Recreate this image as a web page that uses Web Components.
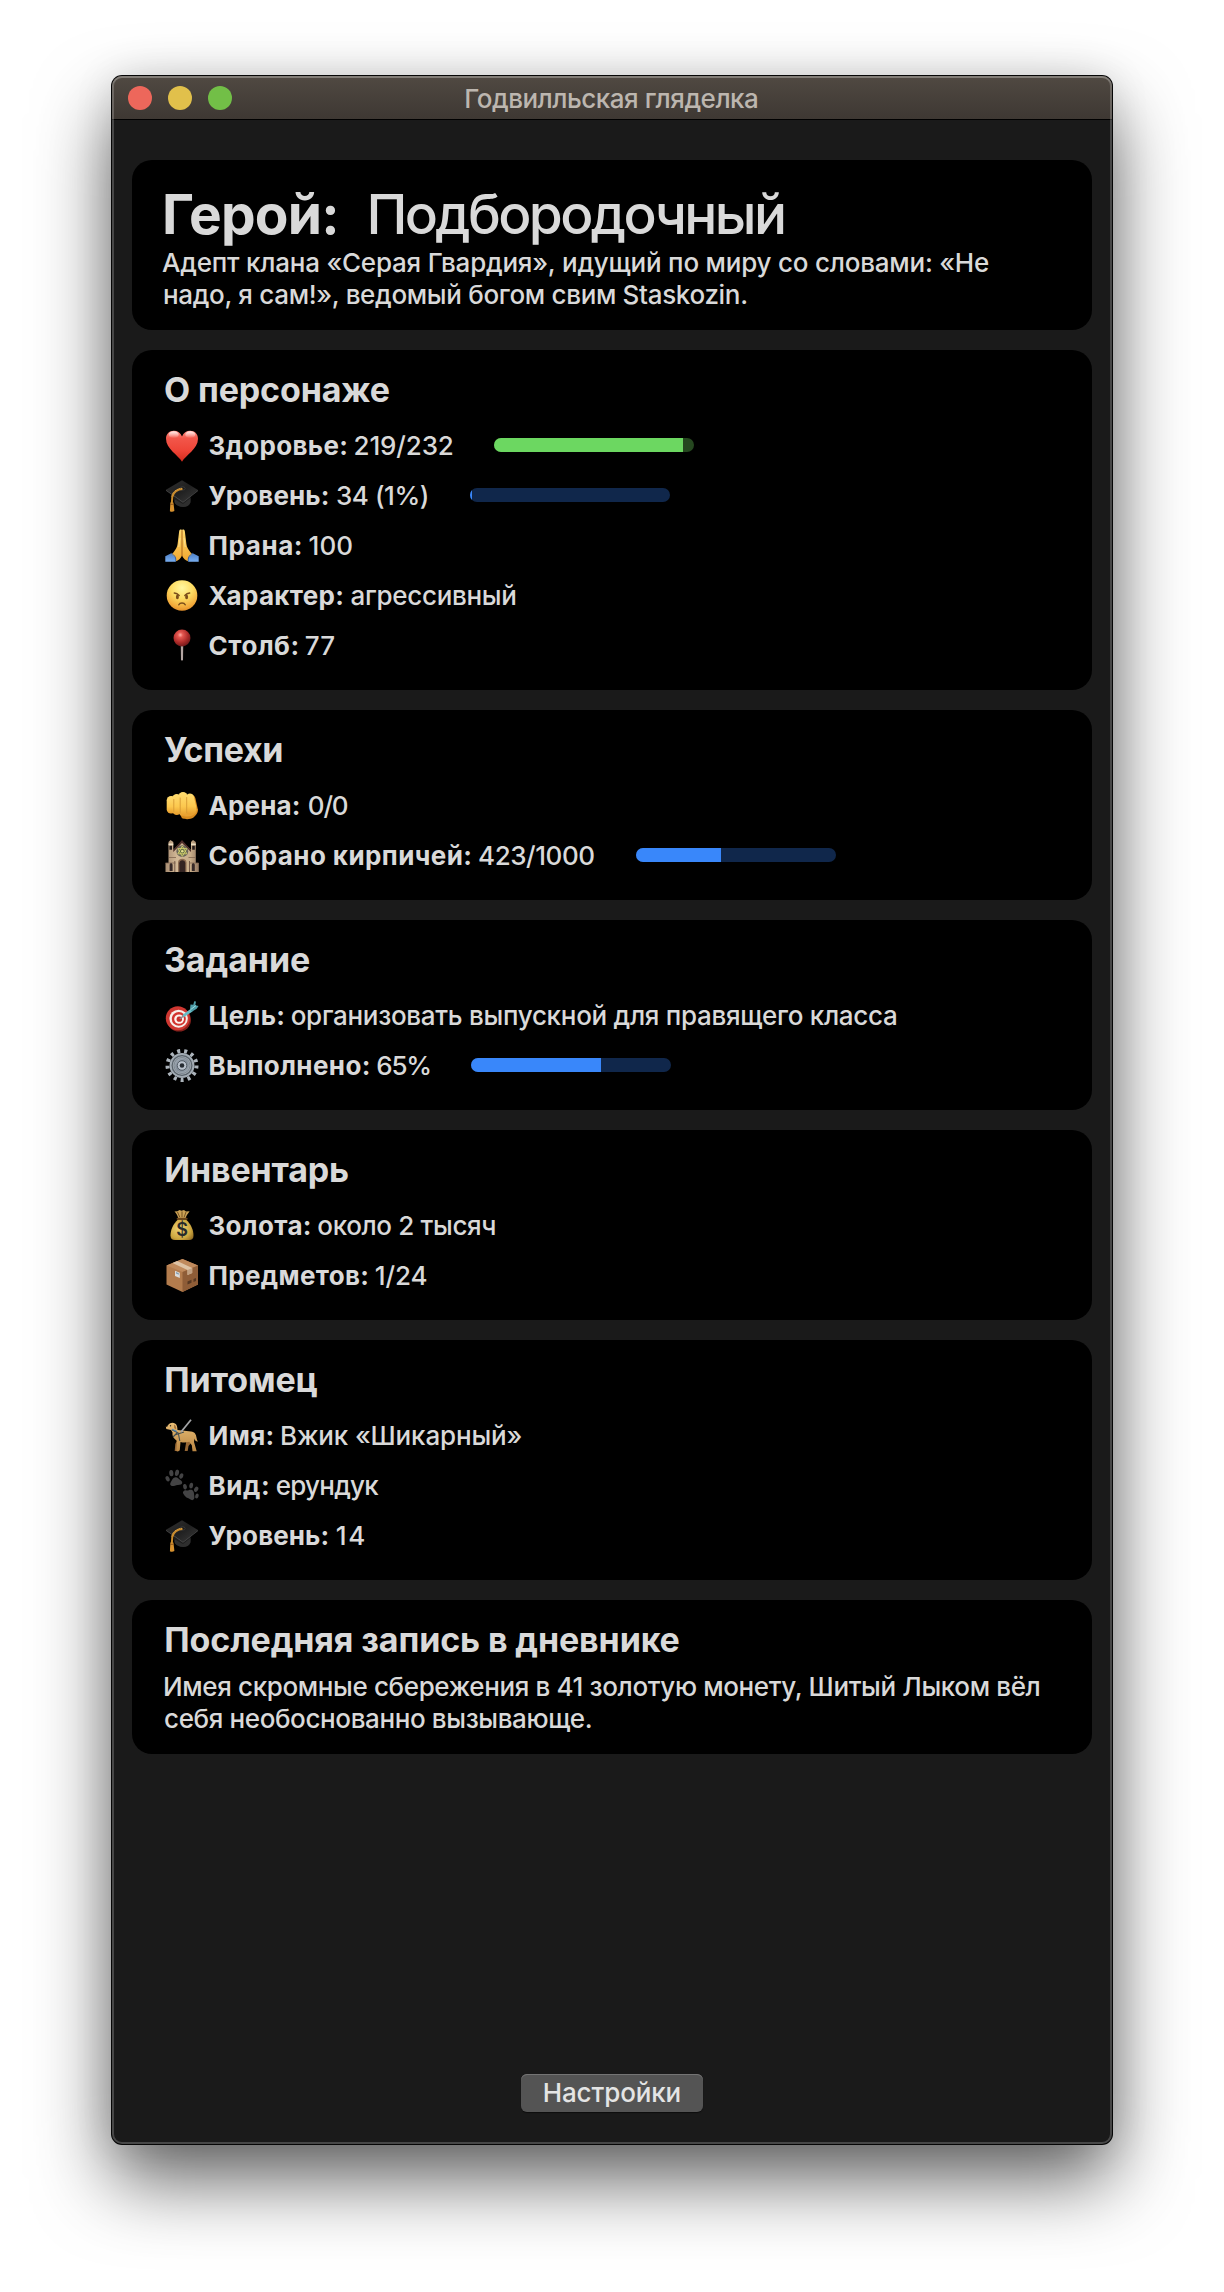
<!DOCTYPE html>
<html lang="ru">
<head>
<meta charset="utf-8">
<title>Годвилльская гляделка</title>
<style>
html, body { margin: 0; background: #fff; }
body { width: 1224px; height: 2292px; overflow: hidden; font-family: Inter, "Liberation Sans", sans-serif; font-size: 26px; font-weight: 450; line-height: 32px; color: #d9d9d9; }
</style>
</head>
<body>
<app-window caption="Годвилльская гляделка">
  <hero-card></hero-card>
  <info-card heading="О персонаже" w="223.5">
    <stat-row icon="heart" label="Здоровье:" lw="136.5" value="219/232" gap="8.5" vw="98" bar="94.5" color="green" bargap="41.8"></stat-row>
    <stat-row icon="cap" label="Уровень:" lw="119" value="34 (1%)" gap="8.5" vw="90.5" bar="1" bargap="42.5"></stat-row>
    <stat-row icon="pray" label="Прана:" lw="91" value="100" gap="9" vw="42.5"></stat-row>
    <stat-row icon="angry" label="Характер:" lw="133.5" value="агрессивный" gap="8.5" vw="163.5"></stat-row>
    <stat-row icon="pin" label="Столб:" lw="87.7" value="77" gap="8.5" vw="28.3"></stat-row>
  </info-card>
  <info-card heading="Успехи" w="118">
    <stat-row icon="fist" label="Арена:" lw="90" value="0/0" gap="9.3" vw="38.7"></stat-row>
    <stat-row icon="castle" label="Собрано кирпичей:" lw="260.5" value="423/1000" gap="9" vw="115" bar="42.3" bargap="42"></stat-row>
  </info-card>
  <info-card heading="Задание" w="143.7">
    <stat-row icon="target" label="Цель:" lw="73.5" value="организовать выпускной для правящего класса" gap="8.7" vw="604"></stat-row>
    <stat-row icon="gear" label="Выполнено:" lw="159" value="65%" gap="8.8" vw="52.7" bar="65" bargap="41"></stat-row>
  </info-card>
  <info-card heading="Инвентарь" w="181.5" shift="1.300">
    <stat-row icon="bag" label="Золота:" lw="100" value="около 2 тысяч" gap="8.8" vw="176.7"></stat-row>
    <stat-row icon="box" label="Предметов:" lw="157.5" value="1/24" gap="8.800" vw="50.4"></stat-row>
  </info-card>
  <info-card heading="Питомец" w="151" shift="1.300">
    <stat-row icon="dog" label="Имя:" lw="62.8" value="Вжик «Шикарный»" gap="9.7" vw="239.3"></stat-row>
    <stat-row icon="paws" label="Вид:" lw="58.2" value="ерундук" gap="9" vw="102.3"></stat-row>
    <stat-row icon="cap" label="Уровень:" lw="118.7" value="14" gap="8.5" vw="27.3"></stat-row>
  </info-card>
  <info-card heading="Последняя запись в дневнике" w="512" shift="1.300">
    <text-line w="874.5">Имея скромные сбережения в 41 золотую монету, Шитый Лыком вёл</text-line>
    <text-line w="425.4">себя необоснованно вызывающе.</text-line>
  </info-card>
  <push-button slot="footer">Настройки</push-button>
</app-window>

<script>
const ICONS = {
heart: `<defs><linearGradient id="h" x1="0" y1="0" x2="0" y2="1"><stop offset="0" stop-color="#ff8f83"/><stop offset=".25" stop-color="#f2564a"/><stop offset=".65" stop-color="#ee4437"/><stop offset="1" stop-color="#d22a1c"/></linearGradient><linearGradient id="hs" x1="0" y1="0" x2="0" y2="1"><stop offset="0" stop-color="#fff" stop-opacity=".85"/><stop offset="1" stop-color="#fff" stop-opacity="0"/></linearGradient></defs><path fill="url(#h)" d="M17 32.7C13.5 26.5 1 20 1 9.8 1 5 4.200 1.700 8.800 1.700c3.800 0 6.700 2 8.200 5.800C18.500 3.700 21.400 1.700 25.200 1.700 29.800 1.700 33 5 33 9.800 33 20 20.500 26.500 17 32.700z"/><ellipse cx="8.700" cy="5.700" rx="5" ry="3.400" fill="url(#hs)"/><ellipse cx="25.300" cy="5.700" rx="5" ry="3.400" fill="url(#hs)"/>`,
cap: `<defs><linearGradient id="c" x1="0" y1="0" x2="1" y2="1"><stop offset="0" stop-color="#303030"/><stop offset=".5" stop-color="#202020"/><stop offset="1" stop-color="#3a3a3a"/></linearGradient></defs><path d="M9 15v8c2 3.500 6 5 9 5 4 0 7.500-3 7.500-6v-7z" fill="#1d1d1d"/><path d="M10 20.500l8 4.500 7.500-6v4.500c-1 3-4 4.500-7.500 4.500-3 0-6-1.300-8-3.500z" fill="#2e2e2e"/><path d="M1 10.800L17 1.300 33 11 18 22.800z" fill="url(#c)"/><path d="M1 10.800l17 12L33 11v.9L18 23.800 1 11.700z" fill="#4a4a4a"/><ellipse cx="17.500" cy="9.500" rx="2.600" ry="1.600" fill="#181818" stroke="#4a4a4a" stroke-width=".6"/><path d="M17.500 10C13 10 8 13 7.300 18l-.5 6.500" fill="none" stroke="#c98a2b" stroke-width="2"/><path d="M17 9.300C12.500 9.500 7.200 12.500 6.300 18" fill="none" stroke="#e8b55c" stroke-width=".7" stroke-dasharray="1.200 1"/><path d="M5.400 23.500h3l1 8.500c-1.500 1-3 1-4.500.2z" fill="#d8922f"/><path d="M5.300 25.300h3.200" stroke="#85501a" stroke-width=".9"/>`,
pray: `<defs><linearGradient id="p" x1="0" y1="0" x2="0" y2="1"><stop offset="0" stop-color="#ffda70"/><stop offset="1" stop-color="#f0a72e"/></linearGradient><linearGradient id="pb" x1="0" y1="0" x2="0" y2="1"><stop offset="0" stop-color="#4d7fc6"/><stop offset="1" stop-color="#78aef0"/></linearGradient></defs><path fill="url(#p)" d="M16.700.8c-1.200-.9-2.300-.3-2.500 1.200L12.600 15c-.4 3-1.800 5.500-4.200 8.500L5.500 26.500l5 6c3-1 5.300-3 6.500-6 1.200 3 3.500 5 6.500 6l5-6-2.900-3c-2.400-3-3.800-5.500-4.200-8.500L19.800 2C19.600.5 18.500-.1 17.300.8l-.3.500z"/><path d="M17 1.200V27" stroke="#a9651a" stroke-width="1"/><path d="M15 9l-1.200 9M19 9l1.200 9" stroke="#ffe69a" stroke-width=".8"/><path fill="url(#pb)" d="M6.200 24.200L.3 27.200V32.700H10.500c1.200-1.600.5-3.300-.5-4.500zM27.800 24.200l5.900 3v5.500H23.500c-1.200-1.600-.5-3.300.5-4.500z"/><path d="M6.200 24.200c3.800 2 5.200 5 4.300 8.500M27.800 24.200c-3.800 2-5.200 5-4.300 8.500" stroke="#375f9c" stroke-width="1" fill="none"/>`,
angry: `<defs><radialGradient id="a" cx=".5" cy=".25" r=".78"><stop offset="0" stop-color="#fff7a0"/><stop offset=".45" stop-color="#fddc62"/><stop offset=".8" stop-color="#f3ac3c"/><stop offset="1" stop-color="#e08a27"/></radialGradient></defs><circle cx="17" cy="16.500" r="15.300" fill="url(#a)"/><path d="M9.300 14c1.800.2 3.500 1 4.900 2.500M24.700 14c-1.800.2-3.500 1-4.900 2.500" fill="none" stroke="#7a4d1a" stroke-width="1.400" stroke-linecap="round"/><ellipse cx="12.400" cy="18" rx="1.500" ry="2.300" fill="#7a4d1a"/><ellipse cx="21.600" cy="18" rx="1.500" ry="2.300" fill="#7a4d1a"/><path d="M13.800 25.800c1.200-2.500 5.200-2.500 6.400 0" fill="none" stroke="#7a4d1a" stroke-width="1.500" stroke-linecap="round"/>`,
pin: `<defs><radialGradient id="n" cx=".4" cy=".32" r=".7"><stop offset="0" stop-color="#ffaea6"/><stop offset=".22" stop-color="#e45750"/><stop offset=".65" stop-color="#ad2b29"/><stop offset="1" stop-color="#6d1819"/></radialGradient><linearGradient id="nn" x1="0" y1="0" x2="1" y2="0"><stop offset="0" stop-color="#6c5d59"/><stop offset=".5" stop-color="#d9ccc9"/><stop offset="1" stop-color="#6c5d59"/></linearGradient></defs><path d="M15.600 15h2.800l-.4 16-1 .8-1-.8z" fill="url(#nn)"/><circle cx="17" cy="9" r="8.500" fill="url(#n)"/>`,
fist: `<defs><linearGradient id="f" x1="0" y1="0" x2="0" y2="1"><stop offset="0" stop-color="#ffdc70"/><stop offset=".6" stop-color="#fcc84e"/><stop offset="1" stop-color="#e69c2c"/></linearGradient></defs><path fill="#d98c20" d="M27 6c3 .5 3.500 3 4 6l2 9c0 3-2 5-4.500 7.500-3 2.200-8.500 2-11.500.8l-2-4 12-5z"/><path fill="#e8a232" d="M16 26c5 2.500 11 2 15-2l1.500-4-7-1z"/><rect x="1.700" y="7" width="9" height="17.500" rx="4.300" fill="url(#f)"/><rect x="7.400" y="5" width="8.600" height="21" rx="4.300" fill="url(#f)"/><rect x="13.500" y="3" width="9" height="24" rx="4.500" fill="url(#f)"/><path fill="url(#f)" d="M21 8c0-4 7-5 8 0l2.300 10c.7 4-2.300 7.500-6 7.500-3 0-4.800-2-4.800-5z"/><path d="M8.800 10.500v12M15.200 9v15M21.700 8.500v15.500" stroke="#d79a34" stroke-width=".9" stroke-linecap="round"/>`,
castle: `<defs><linearGradient id="k" x1="0" y1="0" x2="1" y2="0"><stop offset="0" stop-color="#a88d72"/><stop offset=".35" stop-color="#d3b997"/><stop offset=".75" stop-color="#c8ad89"/><stop offset="1" stop-color="#927760"/></linearGradient></defs><path fill="url(#k)" d="M.5 33V24h3V3l2-2 2.800 2v8L17 2l9 9V3l2-2 2.800 2v21h3v9z"/><path d="M8.300 11L17 1l9 10v2L17 4l-8.700 9z" fill="#4d2d29"/><path d="M3.500 4.500h4.800v1.800H3.500zM26 4.500h4.800v1.800H26z" fill="#eee0c4"/><path d="M4.400 6.800h2.600v4H4.400zM27.200 6.800h2.600v4h-2.600z" fill="#241b1a"/><circle cx="17.300" cy="12.200" r="5.900" fill="#6a665a"/><path d="M17.300 7l4.500 7.800h-9zM17.300 17.400l-4.500-7.800h9z" fill="#626b43" stroke="#d5d16e" stroke-width=".9"/><circle cx="17.300" cy="12.200" r="1.300" fill="#e6e18c"/><path d="M4 18.500h7M23.500 18.500h7M.5 24h10M24 24h9.500" stroke="#816650" stroke-width=".8"/><path d="M13 33V23.500c0-5 8.500-5 8.500 0V33z" fill="#8c6b51"/><path d="M14.300 33V24.300c0-4 6-4 6 0V33z" fill="#342422"/><path d="M4.600 32v-6c0-2.500 3-2.500 3 0v6zM26.800 32v-6c0-2.500 3-2.500 3 0v6z" fill="#362927"/><path d="M9.800 22v11M24.500 22v11" stroke="#765b49" stroke-width="1"/>`,
target: `<ellipse cx="14" cy="21" rx="12" ry="11.500" fill="#84201c"/><ellipse cx="12.800" cy="19.300" rx="12" ry="12" fill="#cf3731"/><ellipse cx="13.600" cy="19.700" rx="9.200" ry="9" fill="#f7eee9"/><ellipse cx="13.800" cy="19.900" rx="7" ry="6.800" fill="#d2342e"/><ellipse cx="14.100" cy="20.100" rx="4.900" ry="4.700" fill="#fff3ee"/><ellipse cx="14.300" cy="20.200" rx="2.700" ry="2.600" fill="#c72d28"/><path d="M14.800 20l4.800-4" stroke="#8c8a92" stroke-width="1.500"/><path d="M18 15.500l7.500-5.500 2 2.500-8 5.200c-1.200.5-2.200-.8-1.500-2.200z" fill="#67bcc6"/><path d="M25 10l.5-4.500 2.800.3.900-3.500 1.800.3-.7 3.600 3.200.8-1.800 2.700-4.900 3z" fill="#4e9ea9"/><path d="M25.500 10.700L31 6.500" stroke="#b4edf0" stroke-width=".8"/>`,
gear: `<defs><linearGradient id="g" x1="0" y1="0" x2="1" y2="1"><stop offset="0" stop-color="#aeb8c2"/><stop offset=".5" stop-color="#808b96"/><stop offset="1" stop-color="#a5afb9"/></linearGradient></defs><circle cx="17" cy="16.500" r="14.500" fill="none" stroke="#acb4bb" stroke-width="4" stroke-dasharray="3 4.008"/><circle cx="17" cy="16.500" r="9.800" fill="url(#g)" stroke="#a2abb3" stroke-width="5.400"/><circle cx="17" cy="16.500" r="9.900" fill="none" stroke="#59626a" stroke-width="1.200"/><circle cx="17" cy="16.500" r="8" fill="none" stroke="#737d86" stroke-width=".8"/><circle cx="17" cy="16.500" r="4.800" fill="#b9c2cc" stroke="#535c65" stroke-width="1"/><circle cx="17" cy="16.500" r="2.300" fill="#252b31"/>`,
bag: `<defs><radialGradient id="b" cx=".4" cy=".45" r=".75"><stop offset="0" stop-color="#f0d374"/><stop offset=".65" stop-color="#cda740"/><stop offset="1" stop-color="#8e6720"/></radialGradient></defs><path fill="url(#b)" d="M13 10.500C8 15 5.500 21 5.500 26.500c0 3 1.500 4.500 4.500 4.500h14c3 0 4.500-1.500 4.500-4.500 0-5.500-2.500-11.500-7.500-16z"/><path fill="#caa155" d="M9.500 2.500l3-.3L14.500 1l2 .8L19 1l2 1.500 3.600-.2C23 4.500 21.300 6.700 20.700 9h-7.500c-.4-2-1.800-4.500-3.700-6.500z"/><path d="M12.500 3l2.200 5M17 2.500V8M21 3l-1.800 5" stroke="#755121" stroke-width="1"/><path d="M12.600 9.700h9" stroke="#6b4419" stroke-width="2" stroke-linecap="round"/><text x="17" y="27" text-anchor="middle" font-family="Inter" font-size="18" font-weight="600" fill="#262a2b">$</text>`,
box: `<path fill="#b37c4d" d="M1.500 6.500L17.500 0 33 6.500v19L17.500 33 1.500 25.500z"/><path fill="#c08a5c" d="M1.500 6.500L17.500 0 33 6.500 17.500 13z"/><path fill="#8f5d37" d="M17.500 13L33 6.500v19L17.500 33z"/><path fill="#dec3a5" d="M7.500 4l4.700-1.900L27.200 8.900v5l-4.700 2v-5z"/><path fill="#c2a182" d="M22.500 10.900l4.700-2v5l-4.700 2z"/><path fill="#dcdcda" d="M10 11.800l4.800 2v5.200L10 17z"/><path fill="#809cae" d="M11 13l2.800 1.200v1.500L11 14.600z"/><path fill="#573822" d="M22.500 22.500l4-1.800v3l-4 1.800zM28.500 20l2.500-1v3l-2.500 1z"/>`,
dog: `<defs><linearGradient id="d" x1="0" y1="0" x2="0" y2="1"><stop offset="0" stop-color="#e8bd75"/><stop offset="1" stop-color="#b98542"/></linearGradient></defs><path fill="#966735" d="M12 21l2 3-1.500 4 .5 4H9.700l.6-7zM23 20l3 4-2.500 3-.8 5h-3l1.500-9z"/><path fill="url(#d)" d="M.8 7.500L3 6.500C4 4 7.500 3 10 4.500c2 1 2.300 3.500 2.500 6.500L26 12.500c4 .5 5 3 5.500 6 .3 2 .8 3 1.500 4-2 .2-3.200-1-3.600-3l-.4 3.500 2.700 9.300H27.500l-.7-6-2.600-3.500c-3 1-6 1-8.700.2l-.7 8c-.2 1.500-3 1.700-3.500 1l.7-10C8.500 19.500 7 17 7.500 13.500L6 11 1.300 10z"/><path fill="#a6733b" d="M9 5.500c2 1 2.500 3 2 5L9.200 9z"/><circle cx="5.500" cy="6.700" r=".7" fill="#2c2117"/><path d="M6.800 10.800l6.500 3.200 1.500 8M12 14l-4 4M10.500 15.800L19 13" fill="none" stroke="#444f51" stroke-width="1.100"/><path d="M7 10.300l5 2.200" stroke="#4c86b8" stroke-width="1.200"/><path d="M16 13L26 .8" stroke="#a4a5a7" stroke-width="1.800"/><path d="M1 7.500l1.500-.3" stroke="#2c2117" stroke-width="1"/>`,
paws: `<g fill="#434344"><path d="M6 16.500c-1.800-1.500 0-3.500 1-5.500 1-2.800 4.300-3.800 6.200-1.800 1 1.400 3.600 1.800 4 4 .2 2.500-2.700 2.600-4.700 2.700-2.500.3-4.800 2-6.500.6z"/><ellipse cx="2.600" cy="9.800" rx="1.900" ry="2.800" transform="rotate(-25 2.600 9.800)"/><ellipse cx="6.300" cy="4.100" rx="2.100" ry="3.200" transform="rotate(-5 6.300 4.100)"/><ellipse cx="12" cy="3.800" rx="2" ry="3.200" transform="rotate(12 12 3.800)"/><ellipse cx="16.300" cy="7" rx="1.900" ry="2.700" transform="rotate(28 16.300 7)"/><path d="M18.500 25c-1.500-2 .5-4 3-3.600 2 .2 3.500-1.500 5.700-.3 2 1.300 1.700 3.700 2 5.500.3 2 .5 4-1.500 4.500-2 .3-3-1.500-5-2-1.800-.6-2.800-2-4.200-4.100z"/><ellipse cx="20" cy="17.800" rx="1.900" ry="2.800" transform="rotate(-15 20 17.800)"/><ellipse cx="26.200" cy="16.600" rx="1.900" ry="2.900" transform="rotate(8 26.200 16.600)"/><ellipse cx="31.200" cy="20.300" rx="1.900" ry="2.800" transform="rotate(30 31.200 20.300)"/><ellipse cx="31.900" cy="27" rx="1.700" ry="2.500" transform="rotate(20 31.900 27)"/></g>`
};

/* A single line whose ink spans `w` pixels: tracking is derived from the measured glyphs. */
customElements.define('text-line', class extends HTMLElement {
  connectedCallback() {
    if (this.shadowRoot) return;
    const root = this.attachShadow({ mode: 'open' });
    root.innerHTML = `<style>:host{display:block;white-space:pre;flex:none}</style><slot></slot>`;
    const run = () => {
      const cs = getComputedStyle(this), text = this.textContent;
      const ctx = document.createElement('canvas').getContext('2d');
      ctx.font = `${cs.fontWeight} ${cs.fontSize} ${cs.fontFamily}`;
      const m = ctx.measureText(text), w = +this.getAttribute('w');
      const ink = m.actualBoundingBoxLeft + m.actualBoundingBoxRight;
      this.style.letterSpacing = ((w + .3 - ink) / (text.length - 1)).toFixed(3) + 'px';
      const left = m.actualBoundingBoxLeft;
      this.style.textIndent = (left >= 0 ? left - 1 : left).toFixed(2) + 'px';
      this.style.width = w + 'px';
    };
    if (this.textContent) run(); else queueMicrotask(run);
  }
});

customElements.define('app-window', class extends HTMLElement {
  constructor() {
    super();
    this.attachShadow({ mode: 'open' }).innerHTML = `<style>
:host{display:flex;flex-direction:column;box-sizing:border-box;width:1000px;height:2068px;margin:76px 112px 0;border-radius:10px;background:#1a1a1a;
 box-shadow:0 0 0 1px #060606,0 36px 76px rgba(0,0,0,.62),0 0 40px rgba(0,0,0,.1);
 position:relative}
:host::after{content:"";position:absolute;inset:0;border-radius:10px;box-shadow:inset 0 0 0 2px rgba(255,255,255,.2);pointer-events:none}
header{display:grid;grid-template-columns:1fr auto 1fr;align-items:center;height:43px;flex:none;border-bottom:1px solid #000;border-radius:10px 10px 0 0;background:linear-gradient(#504942,#3e3833);box-shadow:inset 0 2px 0 #635d56;padding:0 17px 0 16px;color:#bcb6af}
header text-line{padding-top:2px}
.lights{display:flex;gap:16px;padding-top:1px}
i{width:24px;height:24px;border-radius:50%}
main{flex:1;display:flex;flex-direction:column;gap:20px;padding:40px 20px 0}
footer{display:flex;justify-content:center;padding-bottom:32px}
</style><header><div class="lights"><i style="background:#ed675b"></i><i style="background:#e1c04b"></i><i style="background:#72bf47"></i></div><text-line w="290.5"></text-line><span></span></header><main><slot></slot></main><footer><slot name="footer"></slot></footer>`;
  }
  connectedCallback() { this.shadowRoot.querySelector('text-line').textContent = this.getAttribute('caption'); }
});

customElements.define('hero-card', class extends HTMLElement {
  constructor() {
    super();
    this.attachShadow({ mode: 'open' }).innerHTML = `<style>
:host{display:block;background:#000;border-radius:20px;padding:21px 31px 19px}
h1{display:flex;gap:35.4px;margin:0 0 0 2px;height:66px;line-height:66px;font-size:55px;font-weight:450}
.b{font-weight:700}
.s{margin-left:1px}
</style><h1><text-line class="b" w="170">Герой:</text-line><text-line w="413.2">Подбородочный</text-line></h1><text-line w="827">Адепт клана «Серая Гвардия», идущий по миру со словами: «Не</text-line><text-line class="s" w="582.4">надо, я сам!», ведомый богом свим Staskozin.</text-line>`;
  }
});

customElements.define('info-card', class extends HTMLElement {
  constructor() {
    super();
    const shift = this.getAttribute('shift') || 0;
    this.attachShadow({ mode: 'open' }).innerHTML = `<style>
:host{display:block;background:#000;border-radius:20px;padding:18px 33px 19px}
h2{margin:0 0 9px ${shift}px;height:44px;line-height:44px;font-size:34px;font-weight:700}
</style><h2><text-line w="${this.getAttribute('w')}">${this.getAttribute('heading')}</text-line></h2><slot></slot>`;
  }
});

customElements.define('emoji-icon', class extends HTMLElement {
  connectedCallback() {
    if (this.shadowRoot) return;
    this.attachShadow({ mode: 'open' }).innerHTML = `<style>:host{display:block;flex:none;width:34px;height:34px}svg{display:block;overflow:visible}</style><svg width="34" height="34" viewBox="0 0 34 34">${ICONS[this.getAttribute('name')]}</svg>`;
  }
});

customElements.define('progress-bar', class extends HTMLElement {
  connectedCallback() {
    if (this.shadowRoot) return;
    const green = this.getAttribute('color') === 'green';
    this.attachShadow({ mode: 'open' }).innerHTML = `<style>
:host{display:block;flex:none;width:200px;height:14px;border-radius:7px;overflow:hidden;margin-bottom:2px;background:${green ? '#25471f' : '#10274b'}}
div{height:100%;width:${this.getAttribute('value')}%;background:${green ? '#6cd761' : '#3987fa'}}
</style><div></div>`;
  }
});

customElements.define('stat-row', class extends HTMLElement {
  constructor() {
    super();
    const a = n => this.getAttribute(n);
    this.attachShadow({ mode: 'open' }).innerHTML = `<style>
:host{display:flex;align-items:center;height:50px}
emoji-icon{margin-left:-.5px;margin-right:11px}
.l{font-weight:700}
.v{margin-left:${a('gap')}px}
progress-bar{margin-left:${a('bargap')}px}
</style><emoji-icon name="${a('icon')}"></emoji-icon><text-line class="l" w="${a('lw')}">${a('label')}</text-line><text-line class="v" w="${a('vw')}">${a('value')}</text-line>${a('bar') ? `<progress-bar value="${a('bar')}" color="${a('color') || 'blue'}"></progress-bar>` : ''}`;
  }
});

customElements.define('push-button', class extends HTMLElement {
  constructor() {
    super();
    this.attachShadow({ mode: 'open' }).innerHTML = `<style>
:host{display:flex;justify-content:center;align-items:center;width:182px;height:38px;border-radius:6px;background:#545454;box-shadow:inset 0 1px 0 #747474,0 1px 1px rgba(0,0,0,.5);color:#e4e4e4}
</style><text-line w="134.6"></text-line>`;
  }
  connectedCallback() { this.shadowRoot.querySelector('text-line').textContent = this.textContent.trim(); }
});
</script>
</body>
</html>
